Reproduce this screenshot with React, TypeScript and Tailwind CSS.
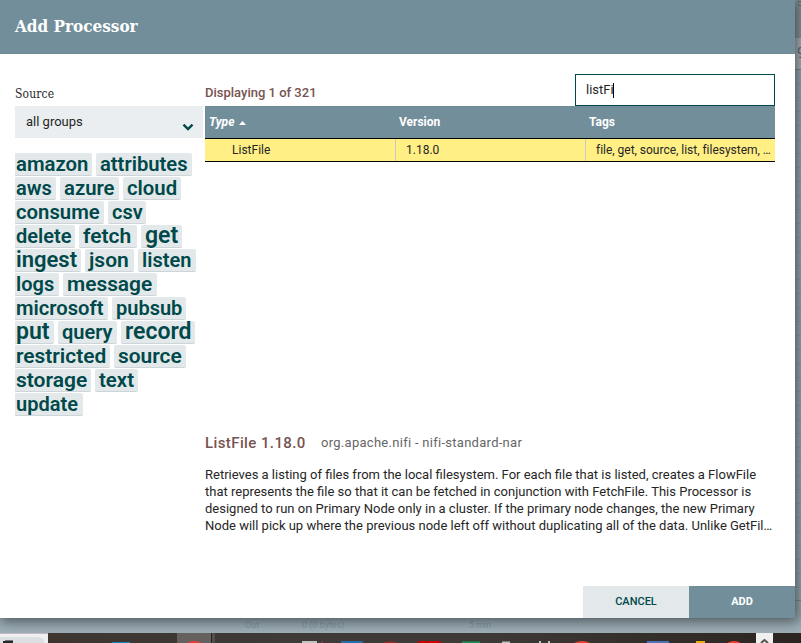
import React from "react";

type Tag = { label: string; box: string; size?: string };

const tagRows: Tag[][] = [
  [{ label: "amazon", box: "w-[77px]", size: "text-[20.3px]" }, { label: "attributes", box: "w-[96px]", size: "text-[20.2px]" }],
  [{ label: "aws", box: "w-[41px]" }, { label: "azure", box: "w-[59px]", size: "text-[20.3px]" }, { label: "cloud", box: "w-[58px]", size: "text-[20.3px]" }],
  [{ label: "consume", box: "w-[89px]", size: "text-[20.3px]" }, { label: "csv", box: "w-[38px]" }],
  [{ label: "delete", box: "w-[60px]" }, { label: "fetch", box: "w-[58px]", size: "text-[21px]" }, { label: "get", box: "w-[41px]", size: "text-[23px]" }],
  [{ label: "ingest", box: "w-[66px]", size: "text-[22px]" }, { label: "json", box: "w-[49px]", size: "text-[21px]" }, { label: "listen", box: "w-[58px]" }],
  [{ label: "logs", box: "w-[44px]" }, { label: "message", box: "w-[94px]", size: "text-[20.9px]" }],
  [{ label: "microsoft", box: "w-[93px]", size: "text-[20.2px]" }, { label: "pubsub", box: "w-[74px]" }],
  [{ label: "put", box: "w-[39px]", size: "text-[23px]" }, { label: "query", box: "w-[59px]" }, { label: "record", box: "w-[74px]", size: "text-[23px]" }],
  [{ label: "restricted", box: "w-[95px]", size: "text-[20.9px]" }, { label: "source", box: "w-[72px]", size: "text-[20.9px]" }],
  [{ label: "storage", box: "w-[76px]", size: "text-[21px]" }, { label: "text", box: "w-[43px]", size: "text-[20.4px]" }],
  [{ label: "update", box: "w-[68px]" }],
];

const description = [
  "Retrieves a listing of files from the local filesystem. For each file that is listed, creates a FlowFile",
  "that represents the file so that it can be fetched in conjunction with FetchFile. This Processor is",
  "designed to run on Primary Node only in a cluster. If the primary node changes, the new Primary",
  "Node will pick up where the previous node left off without duplicating all of the data. Unlike GetFil…",
];

function TagCloud() {
  return (
    <div className="mt-[15px] flex w-[182px] flex-col gap-px">
      {tagRows.map((row, r) => (
        <div key={r} className="flex gap-1">
          {row.map((tag, i) => (
            <span
              key={tag.label}
              className={`block h-[23px] shrink-0 rounded-r-[2px] border-b border-[#cdd5d8] bg-[#e3e8eb] font-semibold leading-[22px] whitespace-nowrap text-[#004849] ${i === 0 ? "pl-[1px]" : "rounded-l-[2px] pl-[4px]"} ${tag.box} ${tag.size ?? "text-[20px]"}`}
            >
              {tag.label}
            </span>
          ))}
        </div>
      ))}
    </div>
  );
}

function Sidebar() {
  return (
    <aside className="w-[205px] shrink-0 pt-[32px] pl-[15px]">
      <div className="h-[20px] font-['Roboto_Slab','DejaVu_Serif_Condensed','DejaVu_Serif',serif] text-[12px] leading-[17px] tracking-[0.15px] text-[#262626]">Source</div>
      <div className="flex h-8 w-[188px] items-center justify-between bg-[#eaeef0] pr-[9px] pl-[11px] text-[13px] text-[#262626]">
        <span className="-mt-px">all groups</span>
        <svg className="mt-[9px] h-[8px] w-[12px]" viewBox="0 0 12 8">
          <path d="M1.5 1.7 6 6.1l4.5-4.4" fill="none" stroke="#004849" strokeWidth="2.4" />
        </svg>
      </div>
      <TagCloud />
    </aside>
  );
}

function Details() {
  return (
    <div className="pt-[272px]">
      <div className="flex h-[18px] items-baseline">
        <h2 className="w-[116px] text-[15px] leading-[18px] font-medium tracking-[0.4px] whitespace-nowrap text-[#775351]">ListFile 1.18.0</h2>
        <span className="relative -top-px text-[13px] leading-[18px] tracking-[0.28px] text-[#666666]">org.apache.nifi - nifi-standard-nar</span>
      </div>
      <div className="mt-[14px] text-[13px] leading-[17px] whitespace-nowrap text-[#262626]">
        {description.map((line) => (
          <p key={line}>{line}</p>
        ))}
      </div>
    </div>
  );
}

function Main() {
  return (
    <main className="w-[570px] pt-[20px]">
      <div className="flex h-8 justify-between">
        <span className="pt-[10px] text-[13px] leading-[17px] font-medium text-[#775351]">Displaying 1 of 321</span>
        <div className="flex w-[200px] items-center border border-[#004849] pl-[10px] text-[13px] text-[#262626]">
          listFi<span className="-ml-px h-[15px] w-px bg-black" />
        </div>
      </div>
      <div className="grid h-8 grid-cols-[190px_190px_190px] items-center bg-[#728e9b] pl-[4px] text-[12px] font-bold text-white">
        <span className="flex items-center gap-[5px]">
          <i>Type</i>
          <svg className="mt-[2px] h-[4px] w-[7px]" viewBox="0 0 7 4"><path d="M0 4 3.5 0 7 4Z" fill="#fff" /></svg>
        </span>
        <span>Version</span>
        <span>Tags</span>
      </div>
      <div className="grid h-6 grid-cols-[191px_190px_189px] border-y border-black bg-[#ffef85] text-[12px] leading-[22px] text-[#262626]">
        <span className="border-r border-[#c8c8c8] pl-[27px]">ListFile</span>
        <span className="border-r border-[#c8c8c8] pl-[10px]">1.18.0</span>
        <span className="pl-[10px] tracking-[-0.02px] whitespace-nowrap">file, get, source, list, filesystem, …</span>
      </div>
      <Details />
    </main>
  );
}

function Taskbar() {
  return (
    <svg className="block h-[10px] w-full shrink-0" viewBox="0 0 801 10" preserveAspectRatio="none">
      <defs>
        <linearGradient id="bar">
          <stop offset="0" stopColor="#3e342d" />
          <stop offset=".35" stopColor="#3d3a38" />
          <stop offset=".6" stopColor="#3e3a37" />
          <stop offset="1" stopColor="#2c2420" />
        </linearGradient>
      </defs>
      <rect width="801" height="10" fill="url(#bar)" />
      <rect width="48" height="10" fill="#f0eff1" />
      <path d="M0 .5h48" stroke="#c4bac0" />
      <path d="M0 4h38q6 0 6 6H0Z" fill="#dedfe0" />
      <path d="M3 10V8h10v2Z" fill="#25292c" />
      <path d="M5 7.5h8" stroke="#777" />
      <rect x="177" width="34" height="10" fill="#66615e" />
      <rect x="211" width="4" height="10" fill="#51504e" />
      <path d="M211.5 0v10" stroke="#252423" />
      <rect x="112" y="9" width="18" height="1" fill="#247fbd" />
      <path d="M187 10q7-4 14 0" fill="#ec3e31" />
      <path d="M302 9h15M539 9h2m7 0h2M502 9.5h8" stroke="#c4c2bf" strokeWidth="2" />
      <path d="M322 8v2" stroke="#a23956" />
      <path d="M341 8h21l2 2h-23Z" fill="#286ca8" />
      <path d="M382 10q8-3 16 0Z" fill="#a52723" />
      <rect x="418" y="8" width="23" height="2" fill="#c70008" />
      <rect x="462" y="8.5" width="18" height="1.5" fill="#159759" />
      <path d="M574 10q8-4 16 0M727 10q7-4 14 0" fill="#ef4131" />
      <rect x="647" y="8" width="22" height="2" fill="#4a72b4" />
      <rect x="696" y="8" width="9" height="2" fill="#edac0d" />
      <rect x="756" width="17" height="10" fill="#efefef" />
      <path d="m761 10 3.5-3 3.5 3" fill="none" stroke="#555" strokeWidth="2" />
    </svg>
  );
}

export default function App() {
  return (
    <div className="flex h-[643px] w-[801px] flex-col overflow-hidden bg-[#9fb0b9] font-['Roboto',sans-serif]">
      <div className="flex h-[633px] shrink-0 overflow-hidden">
        <div className="flex w-[795px] shrink-0 flex-col">
          <section className="relative z-10 flex h-[618px] shrink-0 flex-col bg-white shadow-[2px_2px_12px_2px_rgba(0,0,0,0.5)]">
            <header className="flex h-[54px] shrink-0 items-center bg-[#728e9b] pl-[15px]">
              <h1 className="font-['Roboto_Slab','DejaVu_Serif_Condensed','DejaVu_Serif',serif] text-[17px] font-bold tracking-[-0.02px] text-white">Add Processor</h1>
            </header>
            <div className="flex flex-1">
              <Sidebar />
              <Main />
            </div>
            <footer className="flex h-8 shrink-0 justify-end text-[11px] font-medium">
              <button className="w-[106px] bg-[#e3e8eb] text-[#004849]">CANCEL</button>
              <button className="w-[106px] bg-[#728e9b] font-bold text-white">ADD</button>
            </footer>
          </section>
          <div className="flex h-[15px] items-center text-[9px] leading-[15px] text-[#859aa4]">
            <span className="ml-[245px] w-[57px]">Out</span>
            <span className="w-[167px]">0 (0 bytes)</span>
            <span>5 min</span>
          </div>
        </div>
        <div className="flex w-[6px] shrink-0 flex-col overflow-hidden bg-[#9fb0b9] text-[#60717b]">
          <div className="h-[38px] bg-[#8c9da5] pl-[2px] text-[10px] leading-[5px]">8</div>
          <div className="h-[32px] border-b border-[#82949e] bg-[#b1bdc5] pl-[2px] text-[15px] leading-[30px]">9</div>
          {Array.from({ length: 37 }, (_, i) => (
            <div key={i} className="h-[14px] shrink-0 border-b border-[#91a6b1]" />
          ))}
          <div className="h-[13px] shrink-0 border-b border-[#82949e]" />
        </div>
      </div>
      <Taskbar />
    </div>
  );
}
